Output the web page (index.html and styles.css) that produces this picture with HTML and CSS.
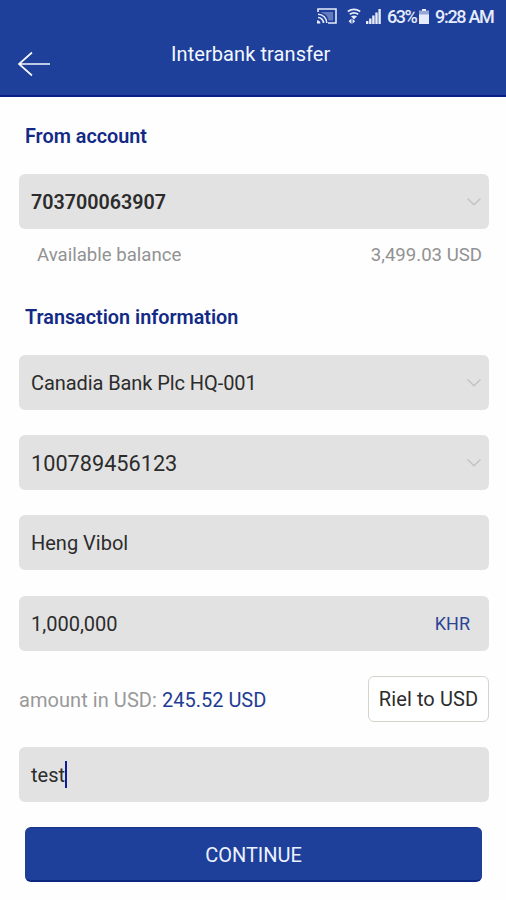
FILE: index.html
```html
<!DOCTYPE html>
<html lang="en">
<head>
<meta charset="utf-8">
<title>Interbank transfer</title>
<link rel="stylesheet" href="styles.css">
</head>
<body>
<header class="header">
  <div class="status">
    <svg class="cast" width="20" height="16" viewBox="0 0 20 16" fill="none" stroke="currentColor" stroke-width="1.6"><path d="M1 4V1h18v14h-8"/><path d="M4.500 4h11.500v8.500h-4.500C11 8 8 5.500 4.500 5z" fill="currentColor" stroke="none" opacity=".35"/><path d="M1 6.200A8.800 8.800 0 0 1 9.800 15M1 9.500A5.500 5.500 0 0 1 6.500 15"/><path d="M0 12.400A3 3 0 0 1 3.400 15.600H0z" fill="currentColor" stroke="none"/></svg>
    <svg class="wifi" width="14" height="17" viewBox="0 0 14 17" fill="none" stroke="currentColor" stroke-width="1.800"><path d="M.8 3.400Q7-.8 13.200 3.400M2.800 6.300Q7 3.600 11.200 6.300"/><path d="M4 8.200Q7 6.600 10 8.200L7 11.500z" fill="currentColor" stroke="none"/><path d="M1.500 13.300 4.500 10.500v5.400zM5.500 10.800v5l2.600-2.500z" fill="currentColor" stroke="none"/></svg>
    <svg class="signal" width="15" height="15" viewBox="0 0 15 15" fill="currentColor"><path d="M0 12h2.400v3H0zM3.100 9.500h2.400V15H3.100zM6.200 6.500h2.400V15H6.200zM9.300 3.500h2.400V15H9.300zM12.400 0h2.400v15h-2.400z"/></svg>
    <span class="percent">63%</span>
    <svg class="battery" width="10" height="15" viewBox="0 0 10 15" fill="currentColor"><path d="M3 0h4v2H3z"/><path d="M0 1.500h10V6H0z" opacity=".6"/><path d="M0 5.500h10V15H0z"/></svg>
    <span class="time">9:28 AM</span>
  </div>
  <div class="bar">
    <svg class="back" width="34" height="26" viewBox="0 0 34 26" fill="none" stroke="currentColor" stroke-width="1.700"><path d="M33 13H2M15 1.500 2 13l13 11.500"/></svg>
    <h1 class="title">Interbank transfer</h1>
  </div>
</header>
<main class="form">
  <h2 class="heading from">From account</h2>
  <div class="field"><b class="account">703700063907</b><svg class="chevron" width="16" height="10" viewBox="0 0 16 10"><path d="M1.500 1.500 8 7.700l6.500-6.200"/></svg></div>
  <div class="balance"><span class="balance-label">Available balance</span><span class="balance-value">3,499.03 USD</span></div>
  <h2 class="heading info">Transaction information</h2>
  <div class="fields">
    <div class="field"><span class="bank">Canadia Bank Plc HQ-001</span><svg class="chevron" width="16" height="10" viewBox="0 0 16 10"><path d="M1.500 1.500 8 7.700l6.500-6.200"/></svg></div>
    <div class="field"><span class="number">100789456123</span><svg class="chevron" width="16" height="10" viewBox="0 0 16 10"><path d="M1.500 1.500 8 7.700l6.500-6.200"/></svg></div>
    <div class="field"><span class="name">Heng Vibol</span></div>
    <div class="field"><span class="amount">1,000,000</span><span class="currency">KHR</span></div>
  </div>
  <div class="convert">
    <p class="converted"><span class="converted-label">amount in USD: </span><span class="usd">245.52 USD</span></p>
    <button class="swap">Riel to USD</button>
  </div>
  <div class="field"><span class="remark">test</span><i class="caret"></i></div>
  <button class="continue"><span>CONTINUE</span></button>
</main>
</body>
</html>
```

FILE: styles.css
```css
* { box-sizing: border-box; }

body {
  margin: 0;
  height: 900px;
  overflow: hidden;
  background: #fefefe;
  color: #2c2c2c;
  font-family: Roboto, "Liberation Sans", sans-serif;
  font-size: 20px;
}

h1, h2, p { margin: 0; }
svg { display: block; flex: none; }
button { font: inherit; padding: 0; }
span, b, h1, h2, p { white-space: nowrap; }

.header {
  height: 97px;
  background: #1e409a;
  border-bottom: 2px solid #071f86;
  color: #f4f7ff;
}

.status {
  height: 32px;
  padding-right: 12px;
  display: flex;
  justify-content: flex-end;
  align-items: center;
  color: #e6ecfb;
  font-size: 18px;
  font-weight: 500;
}
.cast { margin-right: 10px; }
.wifi { margin-right: 5px; }
.signal { margin-right: 6px; }
.percent { width: 30px; letter-spacing: -1.5px; }
.battery { margin: 0 6px 0 2px; }
.time { width: 59px; letter-spacing: -1.300px; }

.bar {
  height: 63px;
  display: grid;
  grid-template-columns: 171px 1fr;
}
.back { margin: 19px 0 0 17px; }
.title {
  margin-top: 10px;
  line-height: 24px;
  font-size: 20px;
  font-weight: 400;
  letter-spacing: 0.08px;
}

.form {
  padding: 27px 17px 0 19px;
  display: flex;
  flex-direction: column;
}

.heading {
  padding-left: 6px;
  line-height: 26px;
  font-size: 19.800px;
  font-weight: 600;
  color: #122a86;
}
.from { margin-bottom: 24px; }
.info { margin: 37px 0 24px; }

.field {
  height: 55px;
  padding: 0 7px 0 12px;
  display: flex;
  align-items: center;
  border-radius: 6px;
  background: #e2e2e2;
}
.account { padding-top: 2px; font-size: 19.700px; font-weight: 600; }
.chevron {
  margin-left: auto;
  fill: none;
  stroke: #c4c4c4;
  stroke-width: 1.5;
}

.balance {
  margin-top: 13px;
  padding: 0 7px 0 18px;
  display: flex;
  justify-content: space-between;
  line-height: 26px;
  font-size: 18.600px;
  color: #929292;
}

.fields { display: grid; gap: 25.200px; }
.bank { letter-spacing: -0.08px; }
.number { padding-top: 2px; font-size: 21.700px; }
.name, .amount { padding-top: 1px; }
.currency { margin: 0 12px 0 auto; font-size: 18px; color: #2c4694; }

.convert {
  margin: 25px 0;
  height: 46px;
  display: flex;
  align-items: center;
  justify-content: space-between;
}
.converted { padding-top: 2px; }
.converted-label { color: #999; white-space: pre; letter-spacing: 0.06px; }
.usd { color: #1f3c94; }
.swap {
  width: 121px;
  height: 46px;
  border: 1px solid #d4d4cc;
  border-radius: 6px;
  background: #fff;
  color: #2c2c2c;
  letter-spacing: 0.1px;
}

.remark { padding-top: 1px; }
.caret { width: 2px; height: 27px; background: #101f96; }

.continue {
  margin: 25px 7px 0 6px;
  height: 55px;
  padding-top: 2px;
  border: 0;
  border-top: 1px solid #173386;
  border-bottom: 2px solid #0b2780;
  border-radius: 6px;
  background: #1e409a;
  color: #edf2ff;
}
```
